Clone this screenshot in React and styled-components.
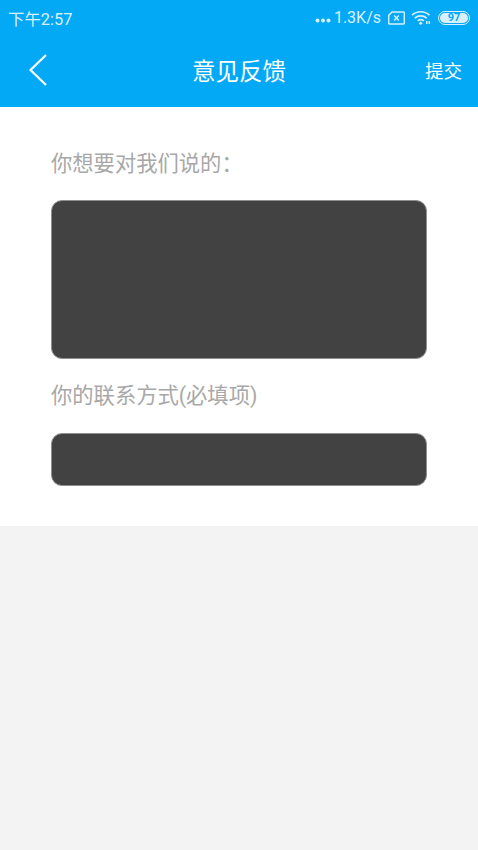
import React from "react";
import styled, { createGlobalStyle } from "styled-components";

const GlobalStyle = createGlobalStyle`
  html, body {
    margin: 0;
    padding: 0;
    height: 100%;
    background: #f3f3f3;
  }
  #root {
    height: 100%;
  }
`;

const Page = styled.div`
  width: 478px;
  height: 850px;
  overflow: hidden;
  display: flex;
  flex-direction: column;
  background: #f3f3f3;
  font-family: "Roboto", "Noto Sans CJK SC", sans-serif;
`;

const Header = styled.header`
  height: 107px;
  background: #04a9f6;
  color: #fff;
  display: flex;
  flex-direction: column;
`;

const StatusBar = styled.div`
  height: 35px;
  padding: 0 8px;
  display: flex;
  align-items: center;
  justify-content: space-between;
  color: #d8f0fd;
  font-size: 16.4px;
`;

const StatusRight = styled.div`
  display: flex;
  align-items: center;
`;

const Speed = styled.span`
  font-size: 16px;
  margin-right: 7px;
`;

const NavBar = styled.div`
  flex: 1;
  display: flex;
  align-items: center;
  justify-content: space-between;
  padding: 0 16px 2px 28px;
`;

const BackButton = styled.svg`
  width: 20px;
  height: 34px;
  display: block;
`;

const Title = styled.div`
  font-size: 23.5px;
  margin-left: 5px;
`;

const Submit = styled.div`
  font-size: 18.5px;
`;

const Form = styled.div`
  height: 419px;
  box-sizing: border-box;
  background: #fff;
  padding: 45px 51px 0;
`;

const Label = styled.div`
  color: #a8a8a8;
  font-size: 21.3px;
  line-height: 24px;
  margin-bottom: ${(p) => p.$gap}px;
`;

const Field = styled.div`
  height: ${(p) => p.$height}px;
  box-sizing: border-box;
  background: #424242;
  border: 1px solid #8f8f8f;
  border-radius: 11px;
  margin-bottom: ${(p) => p.$gap}px;
`;

const Dots = () => (
  <svg width="16" height="5" viewBox="0 0 16 5" style={{ marginTop: 6, marginRight: 3 }}>
    <circle cx="2.5" cy="2.5" r="2" fill="#d8f0fd" />
    <circle cx="8" cy="2.5" r="2" fill="#d8f0fd" />
    <circle cx="13.5" cy="2.5" r="2" fill="#d8f0fd" />
  </svg>
);

const SimIcon = () => (
  <svg width="17" height="14" viewBox="0 0 17 14" style={{ marginRight: 6 }}>
    <path d="M4 1h11.5a.8.8 0 0 1 .8.8v10.4a.8.8 0 0 1-.8.8H1.5a.8.8 0 0 1-.8-.8V4.4z" fill="none" stroke="#d8f0fd" strokeWidth="1.4" />
    <path d="M6.2 4.5l4.6 5M10.8 4.5l-4.6 5" stroke="#d8f0fd" strokeWidth="1.5" />
  </svg>
);

const WifiIcon = () => (
  <svg width="21" height="15" viewBox="0 0 21 15" style={{ marginRight: 6 }}>
    <g fill="none" stroke="#d8f0fd" strokeWidth="1.7">
      <path d="M1 5.2c5-4.6 12.5-4.6 17.5 0" />
      <path d="M3.8 8.1c3.4-3 8.5-3 11.9 0" />
      <path d="M6.7 10.8c1.8-1.4 4.3-1.4 6.1 0" />
    </g>
    <path d="M9.7 11.6l2 2-2 1.4-2-1.4z" fill="#d8f0fd" />
    <rect x="15" y="11" width="1.5" height="3" fill="#d8f0fd" />
    <rect x="17.5" y="11" width="1.5" height="3" fill="#d8f0fd" />
  </svg>
);

const BatteryBox = styled.div`
  width: 32px;
  height: 14px;
  box-sizing: border-box;
  border: 1px solid #d8f0fd;
  border-radius: 7px;
  padding: 1px;
  display: flex;
`;

const BatteryFill = styled.div`
  flex: 1;
  background: #d8f0fd;
  border-radius: 5px;
  color: #04a9f6;
  font-size: 11px;
  font-weight: 700;
  line-height: 10px;
  text-align: center;
`;

export default function App() {
  return (
    <>
      <GlobalStyle />
      <Page>
        <Header>
          <StatusBar>
            <span>下午2:57</span>
            <StatusRight>
              <Dots />
              <Speed>1.3K/s</Speed>
              <SimIcon />
              <WifiIcon />
              <BatteryBox>
                <BatteryFill>97</BatteryFill>
              </BatteryBox>
            </StatusRight>
          </StatusBar>
          <NavBar>
            <BackButton viewBox="0 0 20 34">
              <path d="M18 2L2.5 17 18 32" fill="none" stroke="#fff" strokeWidth="2.2" />
            </BackButton>
            <Title>意见反馈</Title>
            <Submit>提交</Submit>
          </NavBar>
        </Header>
        <Form>
          <Label $gap={24}>你想要对我们说的：</Label>
          <Field $height={159} $gap={25} />
          <Label $gap={25}>你的联系方式(必填项)</Label>
          <Field $height={53} $gap={0} />
        </Form>
      </Page>
    </>
  );
}
